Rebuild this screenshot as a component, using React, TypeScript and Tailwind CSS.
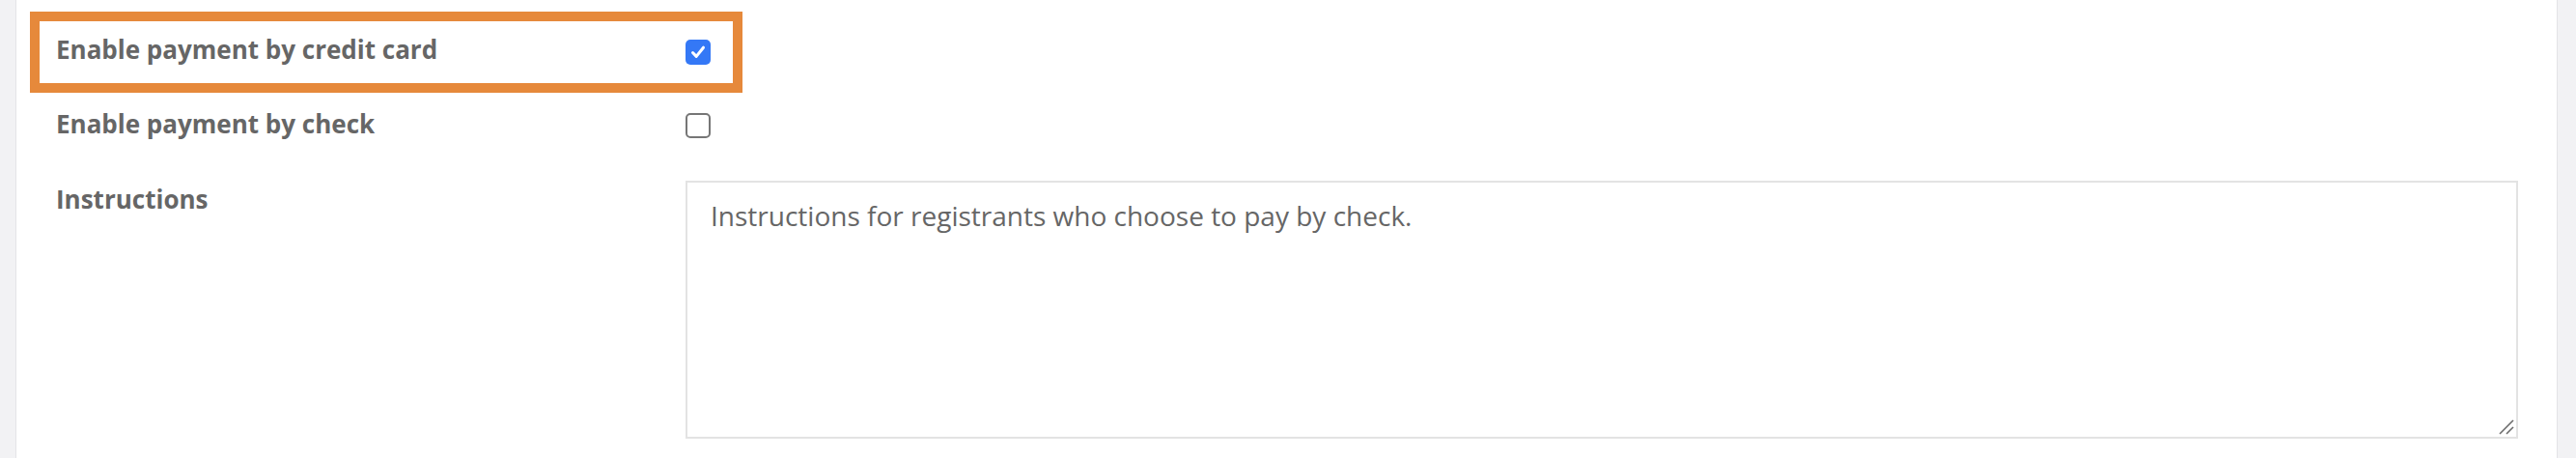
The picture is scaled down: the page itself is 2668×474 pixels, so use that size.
import React from "react";

function Checked() {
  return (
    <div className="flex h-[26px] w-[26px] shrink-0 items-center justify-center rounded-[5px] bg-[#3478f6]">
      <svg width="18" height="18" viewBox="0 0 18 18" fill="none">
        <path d="M3.5 9.5 L7.2 13.4 L14.5 4.2" stroke="#ffffff" strokeWidth="3" strokeLinecap="round" strokeLinejoin="round" />
      </svg>
    </div>
  );
}

function Unchecked() {
  return <div className="h-[26px] w-[26px] shrink-0 rounded-[5px] border-2 border-[#767676] bg-white" />;
}

export default function App() {
  return (
    <div className="flex h-[474px] w-full bg-[#f2f2f4]" style={{ fontFamily: '"Open Sans", "Liberation Sans", sans-serif' }}>
      <div className="w-[17px] shrink-0 border-r border-[#e4e4e7]" />
      <div className="flex flex-1 flex-col bg-white pl-[41px] pr-[40px] pt-[12px]">
        <div className="ml-[-27px] flex h-[84px] w-[738px] items-center border-[10px] border-[#e6893b] pl-[17px]">
          <div className="mt-[-6px] w-[652px] text-[26px] font-bold leading-[34px] text-[#666666]">Enable payment by credit card</div>
          <Checked />
        </div>
        <div className="mt-[21px] flex h-[26px] items-center">
          <div className="mt-[-4px] w-[652px] text-[26px] font-bold leading-[34px] text-[#666666]">Enable payment by check</div>
          <Unchecked />
        </div>
        <div className="mt-[44px] flex">
          <div className="w-[652px] shrink-0 text-[26px] font-bold leading-[38px] text-[#666666]">Instructions</div>
          <div className="relative flex-1">
            <textarea
              readOnly
              defaultValue="Instructions for registrants who choose to pay by check."
              className="block h-[267px] w-full resize-none border-2 border-[#e3e3e3] bg-white px-[24px] pt-[15px] text-[28px] leading-[38px] text-[#666666] outline-none"
              style={{ fontFamily: '"Open Sans", "Liberation Sans", sans-serif' }}
            />
            <svg className="pointer-events-none absolute bottom-[4px] right-[4px]" width="16" height="16" viewBox="0 0 16 16">
              <path d="M1 15 L15 1" stroke="#6b6b6b" strokeWidth="1.6" />
              <path d="M8 15 L15 8" stroke="#6b6b6b" strokeWidth="1.6" />
            </svg>
          </div>
        </div>
      </div>
      <div className="w-[20px] shrink-0 border-l border-[#e4e4e7]" />
    </div>
  );
}
